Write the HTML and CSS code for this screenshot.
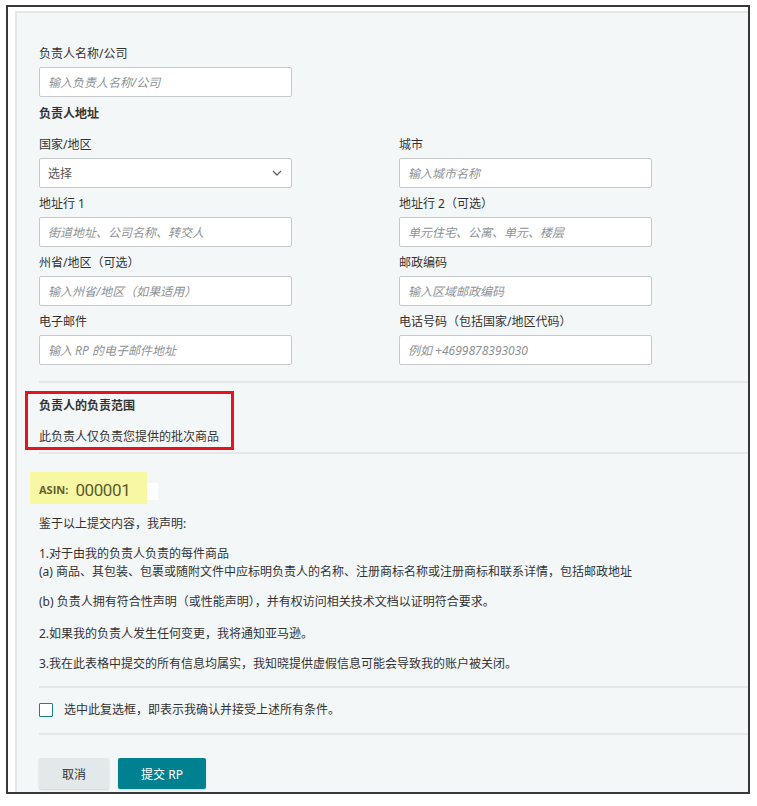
FILE: index.html
```html
<!DOCTYPE html>
<html lang="zh-CN">
<head>
<meta charset="utf-8">
<title>负责人</title>
<link rel="stylesheet" href="styles.css">
</head>
<body>
<div class="frame">
  <div class="panel">
    <div class="field">
      <div class="label">负责人名称/公司</div>
      <input class="input" placeholder="输入负责人名称/公司">
    </div>
    <div class="heading">负责人地址</div>
    <div class="grid">
      <div class="field">
        <div class="label">国家/地区</div>
        <div class="select"><span>选择</span>
          <svg class="chev" width="10" height="6" viewBox="0 0 10 6"><polyline points="1,1 5,5 9,1" fill="none" stroke="#666" stroke-width="1.3"/></svg>
        </div>
      </div>
      <div class="field">
        <div class="label">城市</div>
        <input class="input" placeholder="输入城市名称">
      </div>
      <div class="field">
        <div class="label">地址行 1</div>
        <input class="input" placeholder="街道地址、公司名称、转交人">
      </div>
      <div class="field">
        <div class="label">地址行 2（可选）</div>
        <input class="input" placeholder="单元住宅、公寓、单元、楼层">
      </div>
      <div class="field">
        <div class="label">州省/地区（可选）</div>
        <input class="input" placeholder="输入州省/地区（如果适用）">
      </div>
      <div class="field">
        <div class="label">邮政编码</div>
        <input class="input" placeholder="输入区域邮政编码">
      </div>
      <div class="field">
        <div class="label">电子邮件</div>
        <input class="input" placeholder="输入 RP 的电子邮件地址">
      </div>
      <div class="field">
        <div class="label">电话号码（包括国家/地区代码）</div>
        <input class="input" placeholder="例如 +4699878393030">
      </div>
    </div>
    <div class="sep sep-1"></div>
    <div class="scope">
      <div class="annot"></div>
      <div class="scope-title">负责人的负责范围</div>
      <div class="scope-text">此负责人仅负责您提供的批次商品</div>
    </div>
    <div class="sep sep-2"></div>
    <div class="asin">
      <span class="asin-key">ASIN:</span><span class="asin-val">000001</span>
      <span class="patch"></span>
    </div>
    <div class="decl">
      <p>鉴于以上提交内容，我声明:</p>
      <p>1.对于由我的负责人负责的每件商品<br>(a) 商品、其包装、包裹或随附文件中应标明负责人的名称、注册商标名称或注册商标和联系详情，包括邮政地址</p>
      <p class="p-b">(b) 负责人拥有符合性声明（或性能声明），并有权访问相关技术文档以证明符合要求。</p>
      <p>2.如果我的负责人发生任何变更，我将通知亚马逊。</p>
      <p>3.我在此表格中提交的所有信息均属实，我知晓提供虚假信息可能会导致我的账户被关闭。</p>
    </div>
    <div class="sep sep-3"></div>
    <label class="check-row"><span class="checkbox"></span><span>选中此复选框，即表示我确认并接受上述所有条件。</span></label>
    <div class="sep sep-4"></div>
    <div class="buttons">
      <button class="btn btn-cancel">取消</button>
      <button class="btn btn-submit">提交 RP</button>
    </div>
  </div>
</div>
</body>
</html>
```

FILE: styles.css
```css
* { box-sizing: border-box; }
html, body { margin: 0; padding: 0; background: #fff; }
body {
  font-family: "Noto Sans", "Noto Sans CJK SC", sans-serif;
  font-size: 12px;
  color: #333;
}
.frame {
  margin: 5px 0 0 6px;
  width: 744px;
  height: 789px;
  border: 2px solid #383838;
  padding: 4px 0 0 7px;
  overflow: hidden;
}
.panel {
  height: 100%;
  background: #f4f7f8;
  border-top: 2px solid #e4e7e8;
  border-left: 2px solid #e4e7e8;
  padding: 32px 0 0 22px;
}
.label {
  font-size: 12px;
  line-height: 18px;
  margin-bottom: 4px;
  white-space: nowrap;
}
.input, .select {
  display: flex;
  align-items: center;
  width: 253px;
  height: 30px;
  border: 1px solid #c6cacb;
  border-radius: 2px;
  background: #fff;
  padding: 0 8px;
  font-family: "Noto Sans", "Noto Sans CJK SC", sans-serif;
  font-size: 12px;
  color: #333;
  outline: none;
}
.input::placeholder {
  color: #8e9295;
  font-style: italic;
}
.select { justify-content: space-between; color: #555; }
.chev { margin-right: 1px; }
.heading {
  font-weight: bold;
  line-height: 18px;
  margin-top: 8px;
}
.grid {
  margin-top: 13px;
  display: grid;
  grid-template-columns: 253px 253px;
  column-gap: 107px;
  row-gap: 7px;
}
.sep {
  height: 2px;
  background: #e3e7e8;
}
.sep-1 { margin-top: 16px; }
.scope { position: relative; margin-top: 14px; }
.annot {
  position: absolute;
  left: -14px;
  top: -6px;
  width: 209px;
  height: 59px;
  border: 3px solid #e3141e;
}
.scope-title { font-weight: bold; line-height: 18px; }
.scope-text { line-height: 18px; margin-top: 13px; }
.sep-2 { margin-top: 6px; }
.asin {
  position: relative;
  display: flex;
  align-items: center;
  gap: 7px;
  width: 117px;
  height: 32px;
  margin: 18px 0 0 -9px;
  padding: 3px 0 0 9px;
  background: #f8f8a4;
}
.asin-key {
  font-family: "Open Sans", "Liberation Sans", sans-serif;
  font-weight: 700;
  font-size: 11px;
  color: #62602e;
}
.asin-val {
  font-family: "Roboto", sans-serif;
  font-size: 17px;
  letter-spacing: -0.4px;
  color: #5d5b2c;
}
.patch {
  position: absolute;
  left: 117px;
  top: 11px;
  width: 11px;
  height: 17px;
  background: #fff;
}
.decl { margin-top: 11px; }
.decl p { margin: 0 0 12px; line-height: 18px; }
.decl p.p-b { margin-bottom: 14px; }
.decl p:last-child { margin-bottom: 0; }
.sep-3 { margin-top: 13px; }
.check-row {
  display: flex;
  align-items: center;
  gap: 11px;
  height: 18px;
  margin-top: 13px;
  line-height: 18px;
}
.checkbox {
  width: 14px;
  height: 14px;
  border: 1.5px solid #1b7f8c;
  background: #fff;
  border-radius: 1px;
}
.sep-4 { margin-top: 14px; }
.buttons {
  display: flex;
  gap: 9px;
  margin-top: 23px;
}
.btn {
  height: 31px;
  border: none;
  border-radius: 2px;
  font-family: "Noto Sans", "Noto Sans CJK SC", sans-serif;
  font-size: 12px;
  padding: 0;
}
.btn-cancel {
  width: 70px;
  background: #e3e8ea;
  color: #333;
  box-shadow: 0 1px 2px rgba(0,0,0,0.15);
}
.btn-submit {
  width: 88px;
  background: #00818f;
  color: #fff;
  box-shadow: 0 1px 2px rgba(0,0,0,0.15);
}
```
